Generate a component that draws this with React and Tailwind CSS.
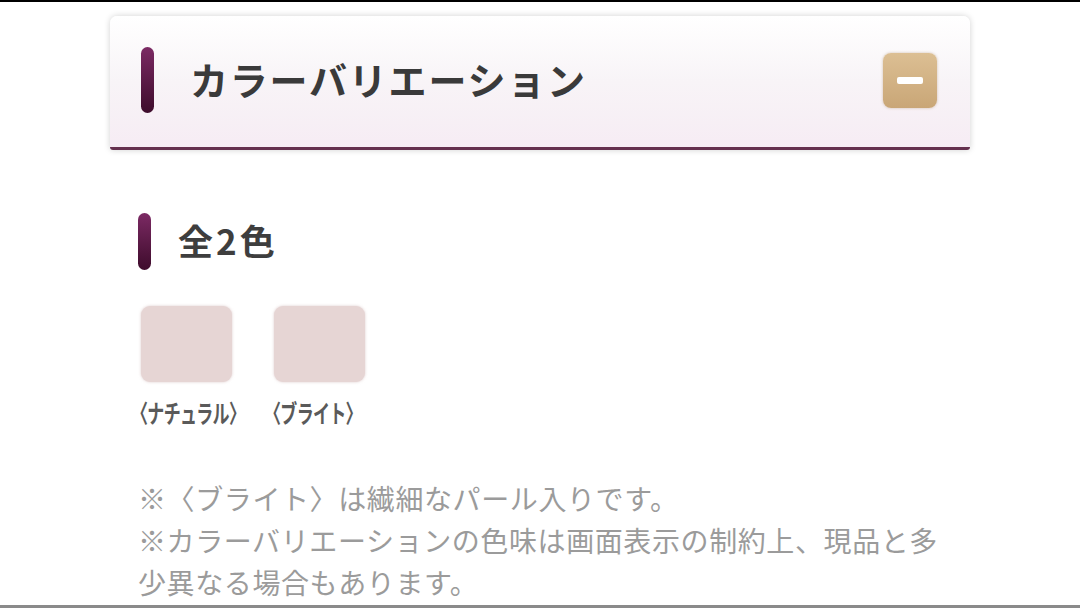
export default function App() {
  const jp = { fontFamily: '"Noto Sans CJK JP", "Noto Sans", sans-serif' };

  return (
    <div className="w-[1080px] h-[608px] bg-white overflow-hidden flex flex-col" style={jp}>
      <div className="h-[2px] bg-black shrink-0" />

      <div className="flex-1 flex flex-col px-[110px] pt-[14px]">
        {/* Accordion header */}
        <div className="h-[134px] rounded-t-[7px] rounded-b-[3px] bg-gradient-to-b from-white via-[#f8f4f7] to-[#f6ecf4] border-b-[3px] border-[#65304f] shadow-[0_0_6px_rgba(0,0,0,0.18)] flex items-center pl-[31px] pr-[33px]">
          <div className="w-[13px] h-[66px] rounded-full bg-gradient-to-b from-[#7c2a64] to-[#3e0c2c] -mt-[3px]" />
          <h2 className="ml-[36px] -mt-[6px] text-[38px] font-semibold text-[#3a3a3a] tracking-[1.8px] flex-1 leading-none">
            カラーバリエーション
          </h2>
          <button className="w-[54px] h-[55px] -mt-[3px] rounded-[8px] bg-gradient-to-b from-[#dcbf93] to-[#c9a677] shadow-[0_0_3px_rgba(150,110,60,0.4)] flex items-center justify-center">
            <span className="block w-[26px] h-[7px] rounded-[2px] bg-white" />
          </button>
        </div>

        {/* Section */}
        <div className="flex items-center mt-[63px] pl-[28px]">
          <div className="w-[13px] h-[57px] rounded-full bg-gradient-to-b from-[#7c2a64] to-[#3e0c2c]" />
          <span className="ml-[27px] -mt-[4px] text-[35px] font-semibold text-[#3e3e3e] leading-none tracking-[3px]">全2色</span>
        </div>

        <div className="flex gap-[42px] mt-[36px] pl-[31px]">
          {['ナチュラル', 'ブライト'].map((name) => (
            <div key={name} className="flex flex-col items-start w-[91px]">
              <div className="w-[91px] h-[76px] rounded-[9px] bg-[#e6d5d4] shadow-[0_0_3px_rgba(200,170,170,0.6)]" />
              <div className="mt-[18px] -ml-[10px] text-[25px] font-bold text-[#5a5a5a] leading-none whitespace-nowrap scale-x-[0.68] origin-left tracking-[-1px]">
                〈{name}〉
              </div>
            </div>
          ))}
        </div>

        <div className="mt-[52px] pl-[28px] text-[28px] leading-[42px] tracking-[0.6px] text-[#9b9b9b] whitespace-nowrap">
          <p>※〈ブライト〉は繊細なパール入りです。</p>
          <p>※カラーバリエーションの色味は画面表示の制約上、現品と多</p>
          <p>少異なる場合もあります。</p>
        </div>
      </div>

      <div className="h-[3px] bg-[#8a8a8a] shrink-0" />
    </div>
  );
}
